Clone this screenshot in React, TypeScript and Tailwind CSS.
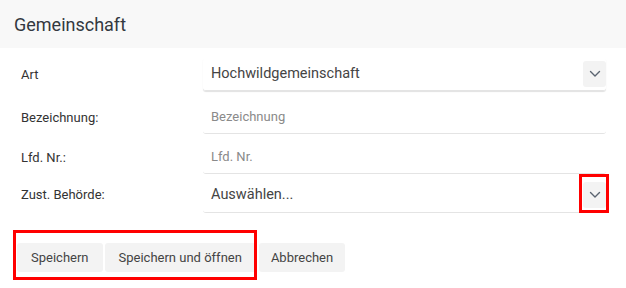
import React from 'react';

const Chevron: React.FC = () => (
  <svg width="14" height="14" viewBox="0 0 14 14" fill="none">
    <path d="M2.5 4.5 7 9l4.5-4.5" stroke="#5a6470" strokeWidth="1.4" strokeLinecap="round" strokeLinejoin="round" />
  </svg>
);

interface RowProps {
  label: string;
  children: React.ReactNode;
  className?: string;
}

const Row: React.FC<RowProps> = ({ label, children, className }) => (
  <div className={`grid grid-cols-[182px_1fr] items-center ${className ?? ''}`}>
    <div className="text-[13px] text-[#333]">{label}</div>
    {children}
  </div>
);

const App: React.FC = () => {
  return (
    <div className="w-[626px] h-[288px] bg-white font-['Roboto',sans-serif]">
      {/* Header */}
      <div className="h-[48px] bg-[#f8f8f8] flex items-center px-[14px]">
        <h2 className="text-[18px] text-[#333840] font-normal">Gemeinschaft</h2>
      </div>

      {/* Form */}
      <div className="pl-[21px] pr-[20px] pt-[10px]">
        <Row label="Art">
          <div className="h-[33px] flex items-center justify-between pl-[8px] rounded-[3px] shadow-[0_1px_1px_rgba(0,0,0,0.12)] border-b border-[#e4e4e4]">
            <span className="text-[14.5px] text-[#444]">Hochwildgemeinschaft</span>
            <div className="w-[23px] h-[26px] bg-[#f3f3f3] rounded-[3px] flex items-center justify-center">
              <Chevron />
            </div>
          </div>
        </Row>

        <Row label="Bezeichnung:" className="mt-[10px]">
          <div className="h-[33px] flex items-center pl-[8px] border-b border-[#e4e4e4] rounded-[3px]">
            <span className="text-[13px] text-[#8a8a8a]">Bezeichnung</span>
          </div>
        </Row>

        <Row label="Lfd. Nr.:" className="mt-[7px]">
          <div className="h-[33px] flex items-center pl-[8px] border-b border-[#e4e4e4] rounded-[3px]">
            <span className="text-[13px] text-[#8a8a8a]">Lfd. Nr.</span>
          </div>
        </Row>

        <Row label="Zust. Behörde:" className="mt-[3px]">
          <div className="h-[36px] flex items-center justify-between pl-[8px] border-b border-[#e4e4e4] rounded-[3px]">
            <span className="text-[14.5px] text-[#444]">Auswählen...</span>
            <div className="relative w-[23px] h-[26px] bg-[#f3f3f3] rounded-[3px] flex items-center justify-center">
              <Chevron />
              <div className="absolute -left-[4px] -top-[8px] w-[30px] h-[39px] border-[3px] border-[#ff0000]" />
            </div>
          </div>
        </Row>
      </div>

      {/* Buttons */}
      <div className="relative mt-[30px] ml-[17px] flex items-center gap-[2px]">
        <button className="h-[29px] px-[14px] bg-[#f3f3f3] rounded-[3px] text-[13px] text-[#444]">Speichern</button>
        <button className="h-[29px] px-[14px] bg-[#f3f3f3] rounded-[3px] text-[13px] text-[#444]">Speichern und öffnen</button>
        <button className="h-[29px] px-[12px] bg-[#f3f3f3] rounded-[3px] text-[13px] text-[#444] ml-[1px]">Abbrechen</button>
        <div className="absolute -left-[4px] -top-[13px] w-[244px] h-[50px] border-[3px] border-[#ff0000] pointer-events-none" />
      </div>
    </div>
  );
};

export default App;
